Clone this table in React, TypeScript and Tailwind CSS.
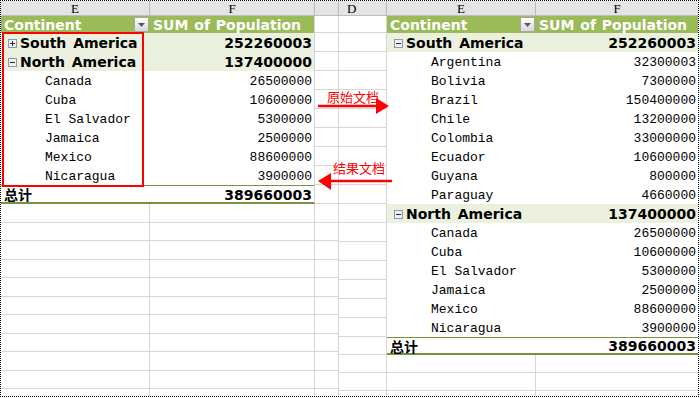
import React from "react";

const MONO = "font-['Liberation_Mono',monospace] text-[13px] text-black leading-none pt-[2px]";
const BOLD = "font-['DejaVu_Sans',sans-serif] font-bold text-[14px] leading-none pt-[1px]";
const CJK = "font-['Noto_Sans_CJK_SC',sans-serif]";

type Side = "L" | "R";

function Expander({ open }: { open: boolean }) {
  return (
    <span className="flex items-center justify-center w-[9px] h-[9px] border border-[#8a98b4] bg-[#eef0f6] shrink-0 mr-[3px]">
      <svg width="7" height="7" viewBox="0 0 7 7">
        <path
          d={open ? "M1 3.5H6" : "M1 3.5H6M3.5 1V6"}
          stroke="#2b2b2b"
          strokeWidth="1"
          shapeRendering="crispEdges"
        />
      </svg>
    </span>
  );
}

function Drop() {
  return (
    <span className="ml-auto mr-[1px] -mt-[1px] w-[15px] h-[15px] border border-[#a6a6a6] bg-linear-to-b from-white to-[#d8d8d8] flex items-center justify-center shrink-0">
      <svg width="7" height="4" viewBox="0 0 7 4">
        <path d="M0 0H7L3.5 4Z" fill="#5a5a5a" />
      </svg>
    </span>
  );
}

function Head({ w, label, extra }: { w: string; label: string; extra?: string }) {
  return (
    <div
      className={`${w} h-full flex items-center ${extra ?? "justify-center"} bg-[#e4e4e4] border-r border-b border-[#bdbdbd] font-['Liberation_Serif',serif] text-[13px] leading-none text-black`}
    >
      {label}
    </div>
  );
}

function Grid({ w, noRight }: { w: string; noRight?: boolean }) {
  return (
    <div
      className={`${w} h-full ${noRight ? "border-b" : "border-r border-b"} border-[#d6d6d6]`}
    />
  );
}

function Row({ side, h, children }: { side: Side; h: string; children: React.ReactNode }) {
  return (
    <div className={`flex shrink-0 ${h}`}>
      {side === "R" && <Grid w="w-[48px]" />}
      {children}
      {side === "L" && <Grid w="w-[24px]" />}
    </div>
  );
}

function fCls(side: Side) {
  return side === "L" ? "w-[165px] border-r border-[#d6d6d6]" : "w-[162px]";
}

function HeaderRow({ side }: { side: Side }) {
  return (
    <Row side={side} h="h-[17px]">
      <div className={`w-[149px] h-full bg-[#9bbb59] flex items-center pl-[3px] text-white ${BOLD}`}>
        Continent
        <Drop />
      </div>
      <div className={`${fCls(side)} h-full bg-[#9bbb59] flex items-center pl-[3px] text-white ${BOLD} whitespace-nowrap [word-spacing:1px]`}>
        SUM of Population
      </div>
    </Row>
  );
}

function GroupRow({ side, name, value, open }: { side: Side; name: string; value: string; open: boolean }) {
  return (
    <Row side={side} h="h-[19px]">
      <div className={`w-[149px] h-full bg-[#ebf1de] flex items-center pl-[7px] text-black ${BOLD} whitespace-nowrap [word-spacing:2px]`}>
        <Expander open={open} />
        {name}
      </div>
      <div className={`${fCls(side)} h-full bg-[#ebf1de] flex items-center justify-end pr-[2px] text-black ${BOLD}`}>
        {value}
      </div>
    </Row>
  );
}

function ChildRow({ side, name, value }: { side: Side; name: string; value: string }) {
  return (
    <Row side={side} h="h-[19px]">
      <div className={`w-[149px] h-full flex items-center pl-[44px] ${MONO} whitespace-nowrap`}>{name}</div>
      <div className={`${fCls(side)} h-full flex items-center justify-end pr-[2px] ${MONO}`}>{value}</div>
    </Row>
  );
}

function TotalRow({ side, h }: { side: Side; h: string }) {
  return (
    <Row side={side} h={h}>
      <div className={`w-[149px] h-full border-t border-b-2 border-[#76933c] flex items-center pl-[3px] text-black ${CJK} font-bold text-[14px] leading-none`}>
        总计
      </div>
      <div
        className={`${side === "L" ? "w-[165px] border-r-[#d6d6d6] border-r" : "w-[162px]"} h-full border-t border-b-2 border-t-[#76933c] border-b-[#76933c] flex items-center justify-end pr-[2px] text-black ${BOLD}`}
      >
        389660003
      </div>
    </Row>
  );
}

function EmptyRow({ side, h }: { side: Side; h: string }) {
  return (
    <Row side={side} h={h}>
      <Grid w="w-[149px]" />
      {side === "L" ? <Grid w="w-[165px]" /> : <Grid w="w-[162px]" noRight />}
    </Row>
  );
}

const north = [
  ["Canada", "26500000"],
  ["Cuba", "10600000"],
  ["El Salvador", "5300000"],
  ["Jamaica", "2500000"],
  ["Mexico", "88600000"],
  ["Nicaragua", "3900000"],
];

const south = [
  ["Argentina", "32300003"],
  ["Bolivia", "7300000"],
  ["Brazil", "150400000"],
  ["Chile", "13200000"],
  ["Colombia", "33000000"],
  ["Ecuador", "10600000"],
  ["Guyana", "800000"],
  ["Paraguay", "4660000"],
];

export default function App() {
  return (
    <div className="relative w-[699px] h-[397px] border border-dotted border-black bg-white overflow-hidden">
      <div className="flex w-full h-full overflow-hidden">
        {/* left sheet */}
        <div className="flex flex-col w-[338px] shrink-0">
          <div className="flex h-[15px] shrink-0">
            <Head w="w-[149px]" label="E" />
            <Head w="w-[165px]" label="F" />
            <Head w="w-[24px]" label="" />
          </div>
          <HeaderRow side="L" />
          <GroupRow side="L" name="South America" value="252260003" open={false} />
          <GroupRow side="L" name="North America" value="137400000" open={true} />
          {north.map(([n, v]) => (
            <ChildRow key={n} side="L" name={n} value={v} />
          ))}
          <TotalRow side="L" h="h-[19px]" />
          {Array.from({ length: 11 }).map((_, i) => (
            <EmptyRow key={i} side="L" h="h-[18.5px]" />
          ))}
        </div>
        {/* right sheet */}
        <div className="flex flex-col w-[359px] shrink-0">
          <div className="flex h-[15px] shrink-0">
            <Head w="w-[48px]" label="D" extra="justify-start pl-[8px]" />
            <Head w="w-[149px]" label="E" />
            <div className="w-[162px] h-full flex items-center justify-center bg-[#e4e4e4] border-b border-[#bdbdbd] font-['Liberation_Serif',serif] text-[13px] leading-none text-black">
              F
            </div>
          </div>
          <HeaderRow side="R" />
          <GroupRow side="R" name="South America" value="252260003" open={true} />
          {south.map(([n, v]) => (
            <ChildRow key={n} side="R" name={n} value={v} />
          ))}
          <GroupRow side="R" name="North America" value="137400000" open={true} />
          {north.map(([n, v]) => (
            <ChildRow key={n} side="R" name={n} value={v} />
          ))}
          <TotalRow side="R" h="h-[18px]" />
          {Array.from({ length: 3 }).map((_, i) => (
            <EmptyRow key={i} side="R" h="h-[18px]" />
          ))}
        </div>
      </div>

      {/* red highlight box */}
      <div className="absolute left-[1px] top-[31px] w-[142px] h-[155px] border-2 border-[#ff0000]" />

      {/* arrows */}
      <svg className="absolute -left-px -top-px pointer-events-none" width="700" height="398" viewBox="0 0 700 398">
        <line x1="318" y1="106" x2="378" y2="106" stroke="#ff0000" strokeWidth="2.5" />
        <polygon points="376,98 389,106 376,114" fill="#ff0000" />
        <line x1="329" y1="181" x2="392" y2="181" stroke="#ff0000" strokeWidth="2.5" />
        <polygon points="318,181 331,173 331,190" fill="#ff0000" />
      </svg>
      <span className={`absolute left-[326px] top-[89px] text-[13px] leading-none text-[#ff0000] ${CJK}`}>原始文档</span>
      <span className={`absolute left-[332px] top-[160px] text-[13px] leading-none text-[#ff0000] ${CJK}`}>结果文档</span>
    </div>
  );
}
